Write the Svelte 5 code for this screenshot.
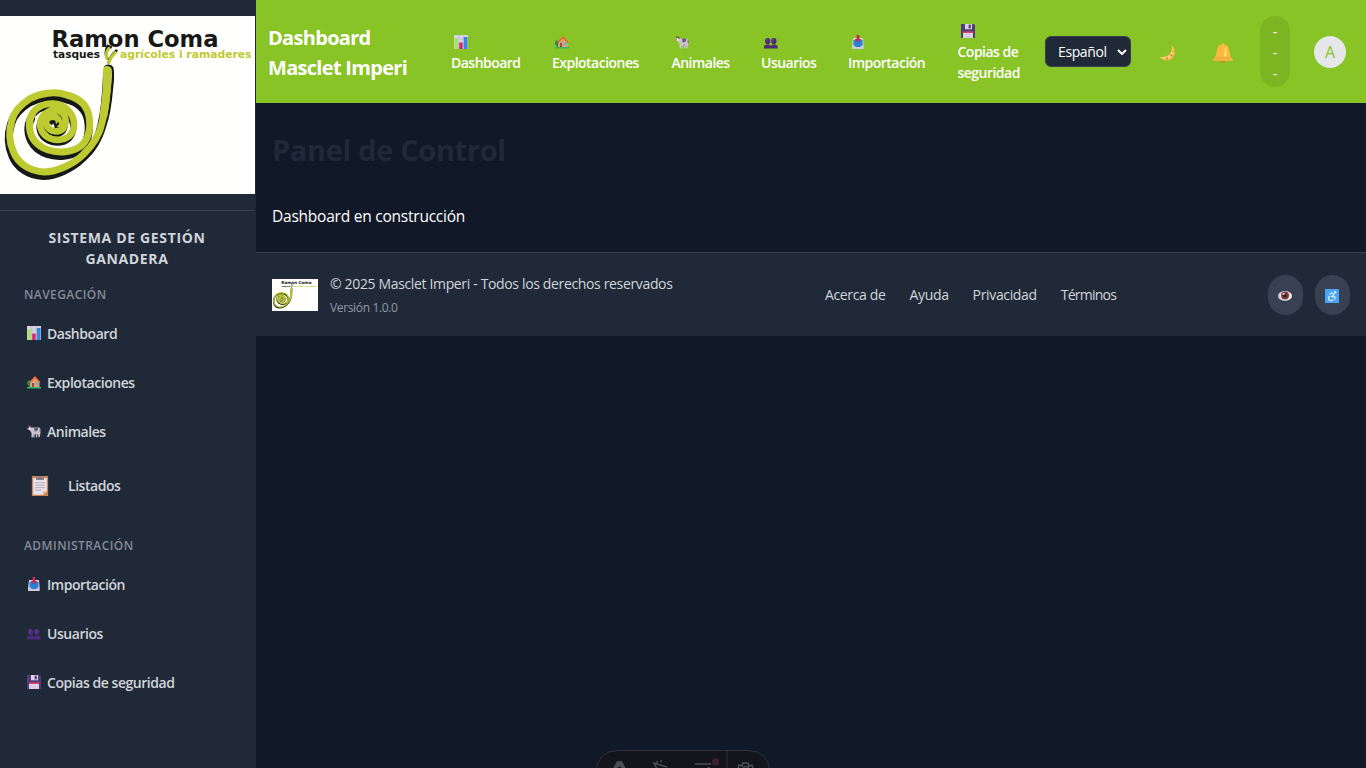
<script>
  const top = [
    { icon: 'chart', label: 'Dashboard', w: 69 },
    { icon: 'house', label: 'Explotaciones', w: 87.5 },
    { icon: 'cow', label: 'Animales', w: 57.5 },
    { icon: 'users', label: 'Usuarios', w: 55 },
    { icon: 'inbox', label: 'Importación', w: 77.5 },
    { icon: 'disk', label: 'Copias de seguridad', w: 64 }
  ];
  const nav = [
    { icon: 'chart', label: 'Dashboard' },
    { icon: 'house', label: 'Explotaciones' },
    { icon: 'cow', label: 'Animales' },
    { icon: 'clip', label: 'Listados', big: true }
  ];
  const admin = [
    { icon: 'inbox', label: 'Importación' },
    { icon: 'users', label: 'Usuarios' },
    { icon: 'disk', label: 'Copias de seguridad' }
  ];
  const links = ['Acerca de', 'Ayuda', 'Privacidad', 'Términos'];
  const outer =
    'M324 212C322 270 318 318 307 365C300 400 280 435 250 463C222 492 170 516 132 516C88 514 54 490 40 455C27 425 25 395 36 360C44 330 65 312 90 296C120 280 165 272 200 285C242 295 264 318 268 355C273 392 262 424 240 440C215 457 175 460 145 450C110 438 90 412 88 378C88 365 90 354 96 345';
  const inner =
    'M88 378C88 342 108 321 138 313C165 307 195 314 212 340C228 366 224 392 208 408C188 424 160 422 142 411C122 398 116 376 124 357C134 335 158 325 178 333C200 344 201 369 190 385C176 399 150 396 142 379C137 364 146 352 160 350C172 350 180 362 175 371';
</script>

{#snippet glyph(name)}
  <svg class="glyph" class:big={name === 'clip'} viewBox="0 0 14 14" aria-hidden="true">
    {#if name === 'chart'}
      <path fill="#d8d3e3" d="M0 0h14v14H0z" /><path stroke="#b9b1c9" stroke-width=".6" d="M0 4h14M0 9h14M4.7 0v14M9.3 0v14" />
      <path fill="#a3e567" d="M.5 3.5H4V14H.5z" /><path fill="#d8286f" d="M5.2 7.5h3.5V14H5.2z" /><path fill="#3487da" d="M9.8 2h3.7v12H9.8z" />
    {:else if name === 'house'}
      <circle cx="2.6" cy="8" r="2.6" fill="#268b51" /><path fill="#24804c" d="M1.8 8h1.5v5H1.8z" />
      <path fill="#dca075" d="M3 7l5-5 4.5 5v6H3z" /><path fill="none" stroke="#e56438" stroke-width="1.5" d="M2.7 7.5L8 2.2l5 5.3" />
      <path fill="#9b4e3c" d="M5 8h2v5H5z" /><path fill="#54b9df" d="M8.7 7.7h2.7v2.5H8.7z" /><path fill="#31b866" d="M0 12h14v1.5H0z" />
    {:else if name === 'cow'}
      <path fill="#c9c3ce" d="M3.5 3.5h8.7q1.3.4 1.3 2.500v3l-.8 4.300h-1.200l-.2-3-1 .2v2.700H8.900v-3H7.500v3.200H6.300l-.1-2.700-.5 2.700H4.500V9L3 6.500z" />
      <path fill="#645c69" d="M7 3.500h4.300l-.8 3.300-2.800.7zM.8 1.500l3 0 1 2L3.500 5 2 3.500zM12.700 4.500l.9 1.300v3l-.9-1z" />
      <path fill="#ebe6ed" d="M2 3l2.200.7-.8 2.800L1 5.500z" /><path fill="#ec669a" d="M.2 4.300h1.700v1.300H.2zM8.500 9.400h1.700v.8H8.500z" />
    {:else if name === 'users'}
      <g fill="#4b2a78"><ellipse cx="3.700" cy="6" rx="2.700" ry="3.100" /><ellipse cx="9.800" cy="6" rx="2.700" ry="3.100" /><path d="M0 13.500v-2q.5-1.800 2.600-2H5q1.800.5 1.800 2Q7 9.800 8.700 9.500h2.400q2.400.4 2.600 2v2z" /></g>
      <path fill="#643c93" d="M2 4q1-1.500 2.700-.6L4 7 2 7zM8.100 4q1-1.500 2.700-.6L10 7 8 7z" opacity=".65" />
    {:else if name === 'inbox'}
      <path fill="#cfc8e1" d="M2 3h10l.7 8v3H1v-3z" /><path fill="#297fd0" d="M2.500 5h9v5L9 12H5L2.500 10z" /><path fill="#c62853" d="M5.600 0h2.800v4h2L7 7.200 3.700 4h1.900z" />
    {:else if name === 'disk'}
      <path fill="#513b79" d="M0 0h12.700L14 1.300V14H0z" /><path fill="#d9d0e5" d="M4 0h7v5.300H4zM2 8.200h10V14H2z" /><path fill="#43325f" d="M7.700.6h2v3.800h-2z" /><path fill="#e04269" d="M2 7.400h10V9H2z" />
    {:else if name === 'clip'}
      <path fill="#c98355" d="M1.300 0h11.400v14H1.300z" /><path fill="#e9e2ef" d="M2.200 1.400h9.600v9.400L9.300 13.200H2.200z" /><path fill="#eaa35f" d="M9.300 13.200v-2.400h2.500z" />
      <path fill="#887e8b" d="M4.200.8h1.600Q7-.7 8.200.8h1.600v2H4.200z" /><path stroke="#a9a0b4" stroke-width=".6" d="M3.500 4.800h7M3.500 6.500h7M3.500 8.200h7M3.500 9.900H8" />
    {:else if name === 'moon'}
      <path fill="#f2b34c" d="M11 .2C14 1.700 15 7 12.400 11 9.600 14.500 3.500 14.800 0 9.800c3.600 1.500 8.200.1 10-3C11.300 4.500 11.500 2.500 11 .2z" /><path fill="#f8d67d" d="M11.300 1.500C14 5 13 9.500 9.500 11.500 6.500 13 3 12.400 1.200 10.500 5 11.500 9 10 10.600 7 11.500 5 11.600 3 11.300 1.500z" />
      <g fill="#ce8435"><circle cx="10.800" cy="9.100" r="1" /><circle cx="7" cy="11.700" r=".9" /><circle cx="12.200" cy="5.300" r=".6" /></g>
    {:else if name === 'bell'}
      <circle cx="7" cy="12.800" r="1.300" fill="#d98a3a" /><circle cx="7" cy="1" r="1" fill="#f1ae40" />
      <path fill="#fbb83f" d="M2.600 5.700Q2.900 1.100 7 .9q4.200.3 4.500 4.900l.9 4.200 1.500 1.400v1.100H.1v-1.200l1.600-1.500z" /><path fill="#ffdd61" d="M8.300 2.200q1.500 1.200 1.400 4.300l-.1 3H7.200q1.400-3 1.100-7.300z" /><path fill="#eca342" d="M1.600 10h10.800v.8H1.300z" />
    {:else if name === 'eye'}
      <ellipse cx="7" cy="7" rx="7" ry="5" fill="#cabfcb" /><ellipse cx="7.500" cy="6.800" rx="6.200" ry="4.400" fill="#eee7ec" /><circle cx="7" cy="6.600" r="4" fill="#803f3b" /><circle cx="7" cy="6.600" r="2" fill="#391e24" /><path fill="#fff" d="M4.800 4h1.800v1.600H4.800z" />
    {:else}
      <rect width="14" height="14" rx="1" fill="#4aa3f3" /><path fill="none" stroke="#e8f5ff" stroke-width="1.100" d="M4.500 5.200l2.300-1.400 2.400 1.400-2.400 2.600h3l.3 3M5 7a2.500 2.500 0 1 0 3.200 3.500" /><circle cx="10.300" cy="3.200" r="1.100" fill="#fff" />
    {/if}
  </svg>
{/snippet}

{#snippet logo()}
  <svg class="logo" viewBox="0 0 255 178" preserveAspectRatio="none" role="img">
    <path fill="#fffffd" d="M0 0h255v178H0z" />
    <g font-family="DejaVu Sans, sans-serif" font-weight="700">
      <text x="51.500" y="30.500" font-size="22.500" fill="#171916" textLength="167" lengthAdjust="spacingAndGlyphs">Ramon Coma</text>
      <text x="53" y="42" font-size="10.600" fill="#171916" textLength="47" lengthAdjust="spacingAndGlyphs">tasques</text>
      <text x="120" y="42" font-size="10.600" fill="#bdca30" textLength="131.500" lengthAdjust="spacingAndGlyphs">agrícoles i ramaderes</text>
    </g>
    <g transform="translate(0 -16) scale(.33333)" fill="none" stroke-linejoin="round" stroke-linecap="round">
      <path d={outer} stroke="#171916" stroke-width="24" transform="translate(-3 12)" />
      <path d={inner} stroke="#171916" stroke-width="19" transform="translate(-2 8)" />
      <path d="M315 201Q328 193 337 203Q341 225 336 265C332 310 326 350 316 377C302 425 278 460 252 480" stroke="#171916" stroke-width="7" />
      <path d="M60 330Q120 280 180 292T260 350" stroke="#171916" stroke-width="9" />
      <path d={outer} stroke="#bdca30" stroke-width="21" />
      <path d={inner} stroke="#bdca30" stroke-width="20" />
      <path d="M321 210C323 260 318 300 311 345" stroke="#bdca30" stroke-width="24" />
      <path d="M155 371q-7-6 0-7 9 0 9 9 6 7 10-3" stroke="#171916" stroke-width="7" />
      <path d="M322 176q-9-18 1-38l9 4M326 188q5-20 23-36" stroke="#171916" stroke-width="8" />
      <path d="M321 175q-6-16 6-30M327 188q4-16 19-30" stroke="#bdca30" stroke-width="9" />
    </g>
  </svg>
{/snippet}

{#snippet menu(items)}
  <ul>
    {#each items as item}
      <li class:wide={item.big}>{@render glyph(item.icon)}<span>{item.label}</span></li>
    {/each}
  </ul>
{/snippet}

<div class="app">
  <aside>
    <div class="brand">{@render logo()}</div>
    <h2>SISTEMA DE GESTIÓN<br />GANADERA</h2>
    <h3>NAVEGACIÓN</h3>
    {@render menu(nav)}
    <h3 class="second">ADMINISTRACIÓN</h3>
    {@render menu(admin)}
  </aside>
  <div class="content">
    <header>
      <h1>Dashboard<br />Masclet Imperi</h1>
      <nav>
        {#each top as item}
          <a style:width="{item.w}px">{@render glyph(item.icon)}<span>{item.label}</span></a>
        {/each}
      </nav>
      <div class="select"><span>Español</span><svg width="10" height="6" viewBox="0 0 10 6"><path d="M1 1l4 4 4-4" fill="none" stroke="#fff" stroke-width="2" /></svg></div>
      <div class="moon">{@render glyph('moon')}</div>
      <div class="bell">{@render glyph('bell')}</div>
      <div class="date"><span>-</span><span>-</span><span>-</span></div>
      <div class="avatar">A</div>
    </header>
    <main>
      <h2>Panel de Control</h2>
      <p>Dashboard en construcción</p>
    </main>
    <footer>
      <div class="mini">{@render logo()}</div>
      <div class="copy"><p>© 2025 Masclet Imperi - Todos los derechos reservados</p><small>Versión 1.0.0</small></div>
      <div class="links">{#each links as l}<span>{l}</span>{/each}</div>
      <div class="tools"><button>{@render glyph('eye')}</button><button>{@render glyph('access')}</button></div>
    </footer>
  </div>
  <svg class="devbar" width="176" height="18" viewBox="0 0 176 18">
    <path d="M.8 22Q3 .5 23 .5H153Q173 .5 175.200 22z" fill="#13151a" stroke="#2d3139" />
    <path d="M132 1v17" stroke="#30333a" />
    <g fill="none" stroke="#4b4d51" stroke-width="1.500"><path d="M62 19l-3-6 13 4M62 11v2M66 10v2M100 14h16M112 18h3M143 18l1-3 3 1 1-3h5l1 3 3-1 1 3M148 18q3-3 6 0" /></g>
    <path d="M18.500 18l3-6q.5-1 1.500-1h3q1 0 1.500 1l3 6h-4q-2-3-4 0z" fill="#4b4d51" /><circle cx="120.500" cy="12" r="3.700" fill="#3f1d2d" />
  </svg>
</div>

<style>
  :global(body) { margin: 0; background: #111827; overflow: hidden; }
  .app { display: flex; width: 1366px; height: 768px; overflow: hidden; position: relative; font-family: "Open Sans", "Noto Sans", sans-serif; color: #fff; font-size: 14px; line-height: 21px; }
  h1, h2, h3, p, ul { margin: 0; padding: 0; font-weight: inherit; list-style: none; }
  svg { display: block; flex: none; }
  .glyph { width: 14px; height: 14px; }
  .glyph.big { width: 20px; height: 20px; }
  aside { width: 256px; background: #1f2937; color: #d1d5db; flex: none; }
  .brand { padding: 16px 0; border-bottom: 1px solid #374151; width: 255px; }
  .logo { width: 255px; height: 178px; }
  aside h2 { font-size: 14px; font-weight: 700; letter-spacing: .65px; text-align: center; padding: 16px 0 1px; width: 254px; }
  h3 { font-size: 12px; line-height: 18px; font-weight: 600; color: #848b98; padding: 16px 24px 19px; letter-spacing: .42px; }
  h3.second { padding-top: 2px; }
  li { height: 49px; box-sizing: border-box; display: flex; align-items: flex-start; padding: 0 27px; gap: 6px; font-weight: 700; letter-spacing: -.6px; }
  li { font-weight: 650; letter-spacing: -.45px; }
  li .glyph { margin-top: 3px; }
  li.wide { height: 65px; padding: 5px 30px 0; gap: 18px; }
  li.wide .glyph { margin-top: 1px; }
  .content { flex: 1; min-width: 0; }
  header { height: 103px; box-sizing: border-box; background: #88c425; display: flex; align-items: center; padding: 0 20px 0 12px; }
  h1 { font-size: 20px; line-height: 30px; font-weight: 700; width: 183px; flex: none; letter-spacing: -.7px; padding-top: 3px; }
  nav { display: flex; gap: 32px; align-items: center; flex: none; }
  nav a { font-weight: 650; letter-spacing: -.52px; flex: none; }
  nav a:last-child { margin-top: -1px; margin-bottom: 1px; }
  nav .glyph { margin: 5px 0 3px 3px; }
  nav span { display: block; }
  .select { width: 86px; height: 31px; flex: none; box-sizing: border-box; background: #1f2937; border: 1px solid #374151; border-radius: 6px; margin-left: 23.500px; padding: 0 3px 0 12px; display: flex; align-items: center; justify-content: space-between; letter-spacing: -.4px; }
  .moon { margin-left: 28px; padding-top: 2px; }
  .moon .glyph { width: 16px; height: 16px; }
  .bell { margin-left: 38px; padding-top: 3px; }
  .bell .glyph { width: 20px; height: 20px; }
  .date { margin-left: 27px; width: 30px; height: 71px; border-radius: 15px; background: #7db522; display: flex; flex-direction: column; align-items: center; justify-content: center; }
  .date span { position: relative; top: 1px; }
  .avatar { margin-left: 24px; width: 32px; height: 32px; line-height: 33px; border-radius: 50%; background: #e5e7eb; color: #88c425; text-align: center; font-size: 16px; }
  main { height: 149px; box-sizing: border-box; padding: 26px 16px; }
  main h2 { color: #1f2937; font-size: 29px; line-height: 42px; font-weight: 700; letter-spacing: -.35px; }
  main p { font-size: 15.500px; line-height: 24px; margin-top: 33px; letter-spacing: -.23px; }
  footer { height: 84px; box-sizing: border-box; background: #1f2937; border-top: 1px solid #374151; display: flex; align-items: center; padding: 0 16px; color: #d1d5db; letter-spacing: -.35px; }
  .mini .logo { width: 46px; height: 32px; }
  .copy { margin-left: 12px; width: 495px; }
  .copy small { display: block; color: #9299a6; font-size: 12px; line-height: 18px; margin-top: 5px; }
  .links { display: flex; gap: 24px; }
  .links span:last-child { letter-spacing: -.75px; }
  .tools { margin-left: auto; display: flex; gap: 12px; }
  button { width: 35px; height: 40px; border: 0; padding: 2px 1px 0 0; border-radius: 18px; background: #374151; display: grid; place-items: center; }
  .devbar { position: absolute; left: 595px; bottom: 0; }
</style>
